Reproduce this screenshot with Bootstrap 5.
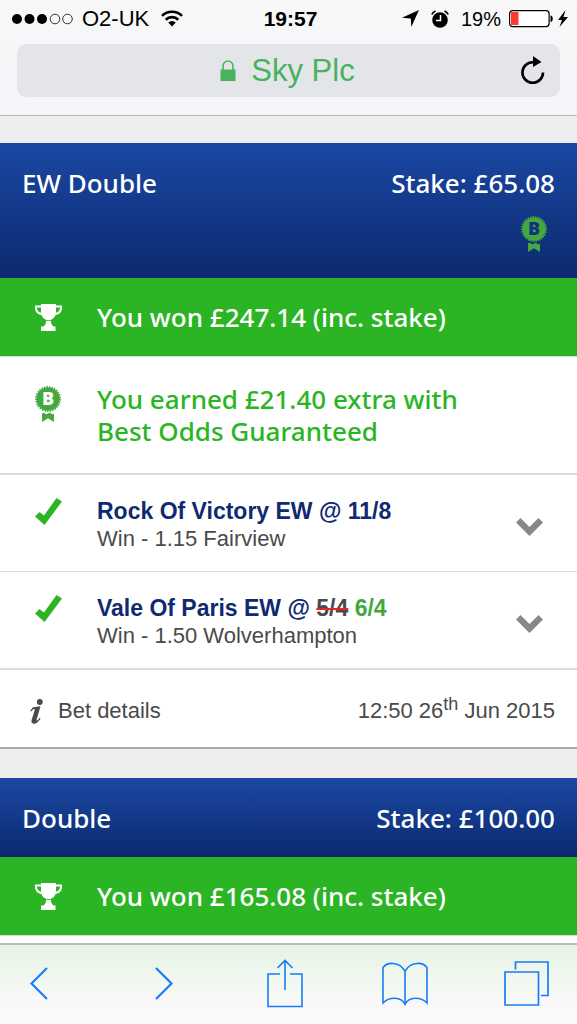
<!DOCTYPE html>
<html lang="en">
<head>
<meta charset="utf-8">
<meta name="viewport" content="width=device-width, initial-scale=1">
<title>Bet history</title>
<link rel="stylesheet" href="https://cdn.jsdelivr.net/npm/bootstrap@5.3.0/dist/css/bootstrap.min.css">
<style>
  body { background: #eee; color: #4a4a4a; font-family: "Liberation Sans", Arial, sans-serif; font-size: 22px; line-height: 28px; }
  svg { display: block; flex: none; }
  button, a.plain { padding: 0; border: 0; background: none; color: inherit; text-decoration: none; }
  .browser-top { background: linear-gradient(#f8f8f8, #f3f5f9); border-bottom: 1px solid #b6b8bc; color: #000; padding-bottom: 18px; }
  .status-bar { height: 44px; padding: 0 8px 7px; }
  .status-bar > div { flex: 1 1 0; }
  .clock { font-size: 21px; font-weight: 700; }
  .charge { font-size: 20px; }
  .address { margin: 0 17px; height: 53px; border-radius: 9px; background: #e4e5e8; padding: 0 14px 0 38px; }
  .address-name { color: #47b35e; font-size: 31px; line-height: 40px; gap: 15px; }
  .bets { gap: 29px; padding-top: 27px; }
  .bet { background: #fff; }
  .bet-head { background: linear-gradient(#1b48a3, #0b296e); color: #fff; padding: 24px 22px 23px; }
  .sky { font-family: "Noto Sans", "Open Sans", sans-serif; font-size: 26px; font-weight: 500; line-height: 32px; margin: 0; }
  .bog { padding: 17px 8px 2px 0; color: #45a83f; }
  .won { background: #2bb424; color: #fff; padding: 23px 22px; border-bottom: 1px solid #d9d9d9; }
  .earned { color: #2bb424; padding: 26px 22px; }
  .ribbon { color: #45a83f; padding-top: 3px; }
  .line { border-bottom: 2px solid #dcdcdc; }
  .line-thin { border-bottom: 1px solid #dcdcdc; }
  .icon-col { width: 75px; padding-left: 13px; flex: none; }
  .leg { padding: 22px 34px 18px 22px; }
  .leg-name { color: #0f2a71; font-weight: 700; font-size: 23px; line-height: 28px; margin: 0; }
  .leg-name s { color: #4a4a4a; text-decoration: line-through 2px #e3242b; }
  .leg-name ins { color: #45a83f; text-decoration: none; }
  .tick { color: #2bb424; padding-top: 1px; }
  .chev { color: #888; padding-top: 4px; }
  .details { padding: 27px 22px 22px 30px; border-bottom: 2px solid #aaa; }
  .details a { gap: 15px; }
  .details sup { font-size: 18px; line-height: 0; top: -8px; }
  .toolbar { height: 81px; border-top: 2px solid #b9c2b8; background: linear-gradient(#e6f4e5, #f9f9f9 75%); color: #1a7cf5; padding: 0 28px 2px 30px; }
  .toolbar button { width: 46px; }
  .toolbar button:first-child { width: 36px; }
  .toolbar svg { margin: 0 auto; }
  .toolbar button:first-child svg { margin: 0; }
</style>
</head>
<body class="d-flex flex-column vh-100 overflow-hidden">
<svg width="0" height="0" class="position-absolute" aria-hidden="true">
  <symbol id="trophy" viewBox="0 0 27 29">
    <path fill="currentColor" d="M6 1h15v1.500h6V5c0 4.300-3 6.500-6.500 7-.8 2.500-2.500 4-4.500 4.700v1.600c0 2.500 1 4.200 2.500 5.200h2V28H6v-4.500h2.500c1.500-1 2.500-2.700 2.500-5.200v-1.600C9 16 7.300 14.500 6.500 12 3 11.500 0 9.300 0 5V2.500h6zM2 4.500c0 3 1.500 4.600 4 5.200V4.500zm19 0v5.200c2.500-.6 4-2.200 4-5.200z"/>
    <path fill="none" stroke="#2bb424" stroke-width=".8" d="M9.500 17.500h8"/>
  </symbol>
  <symbol id="rosette" viewBox="0 0 26 37">
    <circle cx="13" cy="13" r="11.500" fill="currentColor"/>
    <circle cx="13" cy="13" r="12" fill="none" stroke="currentColor" stroke-width="1.800" stroke-dasharray="1.600 1"/>
    <path fill="currentColor" d="M7 27.500q1.500-1.500 3 0t3 0 3 0 3 0V36l-6-3.800L7 36z"/>
  </symbol>
  <symbol id="tick" viewBox="0 0 27 27"><path fill="currentColor" d="M0 18.500 4.500 14l4.500 3.500L21.500 0 27 3.500 9.500 27z"/></symbol>
  <symbol id="chevron" viewBox="0 0 27 18"><path fill="currentColor" d="m0 4.500 4.500-4.500 9 9 9-9 4.500 4.500L13.500 18z"/></symbol>
</svg>

<header class="browser-top">
  <div class="status-bar d-flex align-items-center">
    <div class="d-flex align-items-center ps-1">
      <svg width="62" height="12" viewBox="0 0 62 12"><g fill="#000"><circle cx="5" cy="6" r="5"/><circle cx="17.500" cy="6" r="5"/><circle cx="30" cy="6" r="5"/></g><g fill="none" stroke="#333"><circle cx="43" cy="6" r="4.800"/><circle cx="55.500" cy="6" r="4.800"/></g></svg>
      <span class="ms-1 ps-1">O2-UK</span>
      <svg class="ms-2 ps-1" width="26" height="17" viewBox="0 0 22 17"><g fill="none" stroke="#000" stroke-width="2.600"><path d="M1 5.800a14.200 14.200 0 0 1 20 0M4.700 9.700a9 9 0 0 1 12.600 0"/></g><path d="M11 16.500 7.200 12.600a5.400 5.400 0 0 1 7.600 0z"/></svg>
    </div>
    <span class="clock">19:57</span>
    <div class="d-flex align-items-center justify-content-end">
      <svg width="17" height="17" viewBox="0 0 17 17"><path d="M17 0 9.300 17 8.800 8.500 0 7.700z"/></svg>
      <svg class="ms-2 me-2 ps-1" width="22" height="18" viewBox="0 0 18 18"><circle cx="9" cy="10" r="7.800"/><path fill="none" stroke="#000" stroke-width="1.700" d="M.8 4.500A7 7 0 0 1 4.500 1M13.500 1a7 7 0 0 1 3.700 3.500"/><path fill="none" stroke="#fff" stroke-width="1.500" d="M9.500 5v5.500H5"/></svg>
      <span class="charge ms-1">19%</span>
      <svg class="ms-2" width="44" height="18" viewBox="0 0 44 18"><rect x=".6" y=".6" width="39.500" height="16" rx="3" fill="#fff" stroke="#000" stroke-width="1.200"/><path fill="#fb3b30" d="M2 2h7.500v13H2z"/><path d="M41.500 5.500c3 0 3 6.500 0 6.500z"/></svg>
      <svg class="ms-1" width="12" height="17" viewBox="0 0 12 17"><path d="M8.500 0 1 10h4L2.500 17 11 7H6.500z"/></svg>
    </div>
  </div>
  <div class="address d-flex align-items-center">
    <button type="button" class="address-name flex-fill d-flex align-items-center justify-content-center">
      <svg width="16" height="21" viewBox="0 0 16 21"><path fill="none" stroke="#47b35e" stroke-width="1.600" d="M3 10V6a5 5 0 0 1 10 0v4"/><path fill="#47b35e" d="M.5 9.500h15V21H.5z"/></svg>
      <span>Sky Plc</span>
    </button>
    <button type="button" aria-label="Reload"><svg width="26" height="29" viewBox="0 0 26 29"><path fill="none" stroke="#000" stroke-width="2.600" d="M23 16.500a10.300 10.300 0 1 1-10.300-10.300h2"/><path d="m13 0 8.500 6-8.500 5z"/></svg></button>
  </div>
</header>

<main class="bets flex-fill d-flex flex-column overflow-hidden">
  <article class="bet">
    <div class="bet-head">
      <div class="d-flex justify-content-between"><h2 class="sky">EW Double</h2><span class="sky">Stake: £65.08</span></div>
      <div class="bog d-flex justify-content-end">
        <svg width="26" height="37" viewBox="0 0 26 37" role="img" aria-label="Best Odds Guaranteed"><use href="#rosette"/><text x="13" y="19" text-anchor="middle" font-family="Open Sans, sans-serif" font-weight="800" font-size="18" fill="#113480">B</text></svg>
      </div>
    </div>
    <div class="won d-flex align-items-center"><div class="icon-col"><svg width="27" height="29"><use href="#trophy"/></svg></div><p class="sky">You won £247.14 (inc. stake)</p></div>
    <div class="earned line d-flex">
      <div class="icon-col ribbon"><svg width="26" height="37" viewBox="0 0 26 37"><use href="#rosette"/><text x="13" y="19" text-anchor="middle" font-family="Open Sans, sans-serif" font-weight="800" font-size="18" fill="#fff">B</text></svg></div>
      <p class="sky">You earned £21.40 extra with<br>Best Odds Guaranteed</p>
    </div>
    <div class="leg line-thin d-flex">
      <div class="icon-col tick"><svg width="27" height="27"><use href="#tick"/></svg></div>
      <div class="flex-fill"><h3 class="leg-name">Rock Of Victory EW @ 11/8</h3><div>Win - 1.15 Fairview</div></div>
      <button type="button" class="chev" aria-label="Show selection"><svg width="27" height="18"><use href="#chevron"/></svg></button>
    </div>
    <div class="leg line d-flex">
      <div class="icon-col tick"><svg width="27" height="27"><use href="#tick"/></svg></div>
      <div class="flex-fill"><h3 class="leg-name">Vale Of Paris EW @ <s>5/4</s> <ins>6/4</ins></h3><div>Win - 1.50 Wolverhampton</div></div>
      <button type="button" class="chev" aria-label="Show selection"><svg width="27" height="18"><use href="#chevron"/></svg></button>
    </div>
    <div class="details d-flex justify-content-between align-items-center">
      <a class="plain d-flex align-items-center" href="#details"><svg width="13" height="25" viewBox="0 0 13 25"><g fill="#4a4a4a"><circle cx="9.800" cy="3" r="2.900"/><path d="M3 8.300 10.500 7.300 6.600 20.500c-.3 1.200.3 1.400 1 .7l2.200-2.400.8.600C8.500 23 6 24.700 3.700 24.700c-2 0-2.700-1.500-2.100-3.600l3-9.600c.3-1.200 0-1.600-1.200-1.600L1 12.500l-1-.6z"/></g></svg>Bet details</a>
      <span>12:50 26<sup>th</sup> Jun 2015</span>
    </div>
  </article>

  <article class="bet flex-fill">
    <div class="bet-head d-flex justify-content-between"><h2 class="sky">Double</h2><span class="sky">Stake: £100.00</span></div>
    <div class="won d-flex align-items-center"><div class="icon-col"><svg width="27" height="29"><use href="#trophy"/></svg></div><p class="sky">You won £165.08 (inc. stake)</p></div>
  </article>
</main>

<nav class="toolbar d-flex justify-content-between align-items-center" aria-label="Browser">
  <button type="button" aria-label="Back"><svg width="18" height="33" viewBox="0 0 18 33"><path fill="none" stroke="currentColor" stroke-width="2.200" d="M17 1 1.500 16.500 17 32"/></svg></button>
  <button type="button" aria-label="Forward"><svg width="18" height="33" viewBox="0 0 18 33"><path fill="none" stroke="currentColor" stroke-width="2.200" d="m1 1 15.500 15.500L1 32"/></svg></button>
  <button type="button" aria-label="Share"><svg width="36" height="49" viewBox="0 0 36 49"><path fill="none" stroke="currentColor" stroke-width="1.600" d="M13 15H1v32.500h34V15H23M18 31V2M10.500 9 18 1.500 25.500 9"/></svg></button>
  <button type="button" aria-label="Bookmarks"><svg width="46" height="44" viewBox="0 0 46 44"><path fill="none" stroke="currentColor" stroke-width="1.600" d="M23 43V9C17-1 5 0 1 5.500V41c6-6 18-7 22 1.500C27 34 39 35 45 41V5.500C41 0 29-1 23 9"/></svg></button>
  <button type="button" aria-label="Tabs"><svg width="45" height="45" viewBox="0 0 45 45"><path fill="none" stroke="currentColor" stroke-width="1.700" d="M1 11h33.500v33H1zM11.500 8.500V1H44v33.500h-7"/></svg></button>
</nav>
<script src="https://cdn.jsdelivr.net/npm/bootstrap@5.3.0/dist/js/bootstrap.bundle.min.js"></script>
</body>
</html>
